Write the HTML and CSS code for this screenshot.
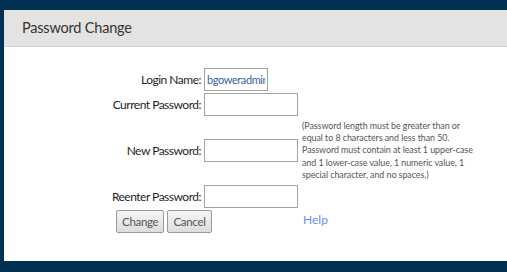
FILE: index.html
```html
<!DOCTYPE html>
<html lang="en">
<head>
    <meta charset="UTF-8">
    <meta name="viewport" content="width=device-width, initial-scale=1.0">
    <title>Password Change</title>
    <link rel="stylesheet" href="styles.css">
</head>
<body>

    <div class="painel">
        <div class="painel_titulo">Password Change</div>

        <!-- Formulario de troca de senha -->
        <form class="painel_corpo" onsubmit="return false">
            <div class="grade">
                <label class="rotulo" for="login">Login Name:</label>
                <div class="campo"><input type="text" id="login" class="entrada curta" value="bgoweradmin"></div>
                <div></div>

                <label class="rotulo" for="atual">Current Password:</label>
                <div class="campo"><input type="password" id="atual" class="entrada"></div>
                <div></div>

                <label class="rotulo" for="nova">New Password:</label>
                <div class="campo"><input type="password" id="nova" class="entrada"></div>
                <div class="dica">(Password length must be greater than or<br>equal to 8 characters and less than 50.<br>Password must contain at least 1 upper-case<br>and 1 lower-case value, 1 numeric value, 1<br>special character, and no spaces.)</div>

                <label class="rotulo" for="repetir">Reenter Password:</label>
                <div class="campo"><input type="password" id="repetir" class="entrada"></div>
                <div></div>

                <div class="botoes">
                    <button type="submit">Change</button>
                    <button type="button">Cancel</button>
                </div>
                <div class="ajuda"><a href="#">Help</a></div>
            </div>
        </form>
    </div>

</body>
</html>
```

FILE: styles.css
```css
body {
    margin: 0;
    padding: 0;
    background-color: #003152;
    font-family: Lato, "Open Sans", sans-serif;
    overflow: hidden;
}
.painel {
    margin: 10px 0 0 4px;
    height: 251px;
    background-color: #fff;
}
.painel_titulo {
    height: 36px;
    line-height: 35px;
    padding-left: 18px;
    font-size: 14.5px;
    letter-spacing: -0.2px;
    color: #333;
    background-color: #e4e3e1;
    border-bottom: 1px solid #d2d2d2;
}
.painel_corpo {
    padding-top: 21px;
}
.grade {
    display: grid;
    grid-template-columns: 98px 98px 200px;
    row-gap: 2px;
    margin-left: 102px;
    align-items: center;
}
.rotulo {
    text-align: right;
    padding-right: 3px;
    font-size: 12px;
    letter-spacing: -0.5px;
    color: #1e1e1e;
    white-space: nowrap;
}
.campo {
    height: 23px;
    display: flex;
    align-items: center;
}
.entrada {
    box-sizing: border-box;
    width: 94px;
    height: 23px;
    padding: 1px 2px;
    border: 1px solid #a3a3a3;
    font-family: Lato, "Open Sans", sans-serif;
    font-size: 11px;
    letter-spacing: -0.4px;
    color: #3b5fa3;
}
.entrada.curta {
    width: 64px;
}
.dica {
    padding: 2px 0;
    font-size: 8.9px;
    line-height: 12.2px;
    letter-spacing: -0.05px;
    color: #555;
    white-space: nowrap;
}
.botoes {
    grid-column: 1 / 3;
    padding-left: 10px;
    display: flex;
    gap: 3px;
}
button {
    height: 23px;
    padding: 0 5px;
    font-family: Lato, "Open Sans", sans-serif;
    font-size: 11.5px;
    letter-spacing: -0.3px;
    color: #555;
    background: linear-gradient(#f6f6f6, #dcdcdc);
    border: 1px solid #9a9a9a;
    border-radius: 2px;
    cursor: pointer;
}
.ajuda {
    padding-left: 1px;
    padding-bottom: 4px;
    font-size: 12px;
}
.ajuda a {
    color: #6a90e6;
    text-decoration: none;
}
```
